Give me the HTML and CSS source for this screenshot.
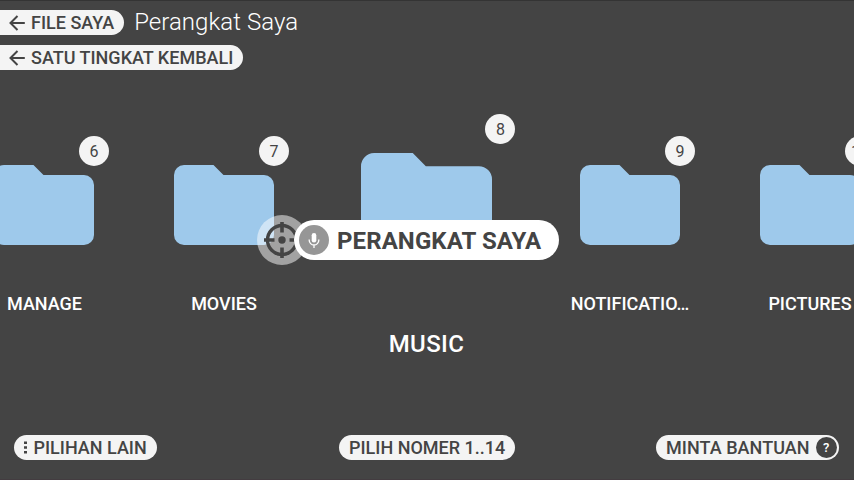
FILE: index.html
```html
<!DOCTYPE html>
<html lang="id">
<head>
<meta charset="utf-8">
<title>Perangkat Saya</title>
<link rel="stylesheet" href="styles.css">
</head>
<body>
<svg class="defs" width="0" height="0">
  <symbol id="folder" viewBox="0 0 100 80"><path d="M10 0H39.500L49.500 10H90A10 10 0 0 1 100 20V70A10 10 0 0 1 90 80H10A10 10 0 0 1 0 70V10A10 10 0 0 1 10 0Z" fill="#9ec9eb"/></symbol>
  <symbol id="back" viewBox="0 0 16 16"><path d="M15.800 8H1.500M8.500 1L1.500 8L8.500 15" fill="none" stroke="#444" stroke-width="2"/></symbol>
</svg>
<main class="screen">
  <header class="top">
    <div class="row">
      <button class="pill edge"><svg class="arrow"><use href="#back"/></svg><span>FILE SAYA</span></button>
      <h1>Perangkat Saya</h1>
    </div>
    <button class="pill edge"><svg class="arrow"><use href="#back"/></svg><span>SATU TINGKAT KEMBALI</span></button>
  </header>
  <section class="carousel">
    <article class="item"><div class="art"><svg><use href="#folder"/></svg><b class="badge">6</b></div><p class="nudge">MANAGE</p></article>
    <article class="item"><div class="art"><svg><use href="#folder"/></svg><b class="badge">7</b></div><p>MOVIES</p></article>
    <article class="item current"><div class="art"><svg><use href="#folder"/></svg><b class="badge">8</b></div><p>MUSIC</p></article>
    <article class="item"><div class="art"><svg><use href="#folder"/></svg><b class="badge">9</b></div><p>NOTIFICATIO…</p></article>
    <article class="item"><div class="art"><svg><use href="#folder"/></svg><b class="badge">10</b></div><p>PICTURES</p></article>
  </section>
  <footer class="bottom">
    <button class="pill more"><svg width="3" height="13" viewBox="0 0 3 13"><path d="M0 .5h3v2.600h-3zM0 5.200h3v2.600h-3zM0 9.900h3v2.600h-3z" fill="#444"/></svg><span>PILIHAN LAIN</span></button>
    <button class="pill pick"><span>PILIH NOMER 1..14</span></button>
    <button class="pill help"><span>MINTA BANTUAN</span><i>?</i></button>
  </footer>
  <div class="cursor">
    <svg width="50" height="50" viewBox="0 0 50 50"><circle cx="25" cy="25" r="25" fill="#fff" fill-opacity=".5"/><g fill="none" stroke="#444"><circle cx="25" cy="25" r="14.500" stroke-width="3.400"/><path d="M25 7V17.500M25 32.500V43M7 25H17.500M32.500 25H43" stroke-width="3.600"/></g><circle cx="25" cy="25" r="3.700" fill="#444"/></svg>
  </div>
  <div class="voice">
    <svg width="30" height="30" viewBox="0 0 30 30"><circle cx="15" cy="15" r="15" fill="#969696"/><rect x="12.700" y="8" width="4.600" height="9.500" rx="2.300" fill="#fff"/><path d="M10.200 14.500V15.200A4.800 4.800 0 0 0 19.800 15.200V14.500M15 20V23" fill="none" stroke="#fff" stroke-width="1.300"/></svg>
    <span>PERANGKAT SAYA</span>
  </div>
</main>
</body>
</html>
```
FILE: styles.css
```css
* { box-sizing: border-box; }
body { margin: 0; font-family: Roboto, "Liberation Sans", sans-serif; }
.defs { position: absolute; }
.screen {
  position: relative;
  width: 854px;
  height: 480px;
  overflow: hidden;
  background: #444;
  border-top: 1px solid #343434;
  border-bottom: 1px solid #433c40;
  display: flex;
  flex-direction: column;
}
.top {
  height: 112px;
  padding-top: 9px;
  display: flex;
  flex-direction: column;
  align-items: flex-start;
  gap: 10px;
}
.row { display: flex; align-items: center; height: 25px; }
h1 {
  margin: 0 0 0 10px;
  font-size: 24px;
  line-height: 25px;
  font-weight: 300;
  letter-spacing: .05px;
  color: #fff;
  white-space: nowrap;
}
.pill {
  height: 25px;
  padding: 0 10px;
  border: 0;
  border-radius: 13px;
  background: #f4f4f4;
  color: #444;
  font: 500 18px/25px Roboto, "Liberation Sans", sans-serif;
  display: flex;
  align-items: center;
  white-space: nowrap;
}
.edge { border-radius: 0 13px 13px 0; padding-left: 9px; }
.arrow { width: 16px; height: 16px; margin-right: 6px; }
.carousel {
  height: 310px;
  margin-left: -46px;
  width: 946px;
  display: flex;
}
.item {
  flex: none;
  width: 180px;
  padding-top: 52px;
  display: flex;
  flex-direction: column;
  align-items: center;
}
.art { position: relative; width: 100px; height: 80px; }
.art svg { display: block; width: 100%; height: 100%; }
.badge {
  position: absolute;
  right: -15px;
  top: -29px;
  width: 30px;
  height: 30px;
  border-radius: 50%;
  background: #f4f4f4;
  color: #444;
  font-weight: 400;
  font-size: 16px;
  line-height: 31px;
  text-align: center;
}
.item p {
  margin: 46px 0 0;
  font-size: 18px;
  line-height: 26px;
  font-weight: 500;
  color: #fff;
  white-space: nowrap;
}
.item .nudge { padding-left: 1px; }
.current { width: 226px; padding-top: 40px; }
.current .art { width: 131px; height: 105px; margin-right: 1px; }
.current .badge { right: -23px; top: -39px; padding-left: 1px; }
.current p { margin-top: 70px; font-size: 24px; line-height: 32px; letter-spacing: .35px; padding-right: 1px; }
.bottom {
  flex: none;
  height: 25px;
  margin-top: 12px;
  padding: 0 15px 0 14px;
  display: grid;
  grid-template-columns: 325px 317px 183px;
}
.more { width: 143px; }
.more svg { flex: none; margin: 0 6.500px 0 0; }
.pick { width: 176px; }
.help { width: 183px; padding-right: 0; letter-spacing: .05px; }
.help i {
  flex: none;
  width: 21px;
  height: 21px;
  margin-left: 6px;
  border-radius: 50%;
  background: #444;
  color: #fff;
  font: 500 13px/21px Roboto, sans-serif;
  text-align: center;
}
.cursor { position: absolute; left: 257px; top: 214px; }
.cursor svg, .voice svg { display: block; flex: none; }
.voice {
  position: absolute;
  left: 294px;
  top: 219px;
  width: 265px;
  height: 40px;
  padding-left: 5px;
  border-radius: 20px;
  background: #fff;
  color: #444;
  display: flex;
  align-items: center;
  gap: 8px;
  font-size: 24px;
  line-height: 40px;
  font-weight: 700;
  letter-spacing: .1px;
  white-space: nowrap;
}
.voice span { padding-top: 2px; }
```
